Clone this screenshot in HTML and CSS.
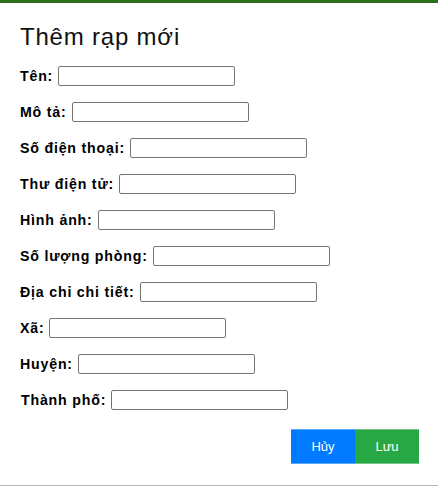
FILE: index.html
```
<!DOCTYPE html>
<html lang="vi">
<head>
  <meta charset="UTF-8" />
  <meta name="viewport" content="width=device-width, initial-scale=1.0"/>
  <title>Thêm rạp mới</title>
  <link rel="stylesheet" href="styles.css">
</head>
<body>
  <div class="modal">
    <h2>Thêm rạp mới</h2>
    <form class="form">
      <div class="row"><label>Tên:</label><input type="text"></div>
      <div class="row"><label>Mô tả:</label><input type="text"></div>
      <div class="row"><label>Số điện thoại:</label><input type="text"></div>
      <div class="row"><label>Thư điện tử:</label><input type="text"></div>
      <div class="row"><label>Hình ảnh:</label><input type="text"></div>
      <div class="row"><label>Số lượng phòng:</label><input type="text"></div>
      <div class="row"><label>Địa chỉ chi tiết:</label><input type="text"></div>
      <div class="row"><label>Xã:</label><input type="text"></div>
      <div class="row"><label>Huyện:</label><input type="text"></div>
      <div class="row indent"><label>Thành phố:</label><input type="text"></div>
      <div class="btns">
        <button type="button" class="cancel">Hủy</button>
        <button type="button" class="save">Lưu</button>
      </div>
    </form>
  </div>
</body>
</html>
```

FILE: styles.css
```
* {
  box-sizing: border-box;
  font-family: "Liberation Sans", Arial, sans-serif;
}
body {
  margin: 0;
  background: #fff;
  color: #000;
}
.modal {
  border-top: 3px solid #2b6e1b;
  border-bottom: 1px solid #b3b3b3;
  height: 486px;
  padding: 0 19px 0 20px;
}
h2 {
  margin: 20px 0 15px;
  font-size: 24px;
  font-weight: normal;
  letter-spacing: 0.8px;
  color: #111;
}
.form {
  display: flex;
  flex-direction: column;
  gap: 16px;
}
.row {
  display: flex;
  align-items: center;
  gap: 5px;
}
.row.indent {
  padding-left: 1px;
}
.row label {
  font-size: 14.2px;
  font-weight: bold;
  letter-spacing: 0.8px;
}
.row input {
  width: 177px;
  height: 20px;
  margin: 0;
  border: 1px solid #767676;
  border-radius: 2px;
  padding: 1px 2px;
  font-size: 13px;
}
.btns {
  display: flex;
  justify-content: flex-end;
  margin-top: 3px;
}
.btns button {
  width: 64px;
  height: 35px;
  border: none;
  border-top: 1px solid rgba(255,255,255,0.35);
  border-bottom: 1px solid rgba(255,255,255,0.35);
  color: #fff;
  font-size: 13px;
  cursor: pointer;
}
.cancel {
  background: #007bff;
}
.save {
  background: #28a745;
}
```
